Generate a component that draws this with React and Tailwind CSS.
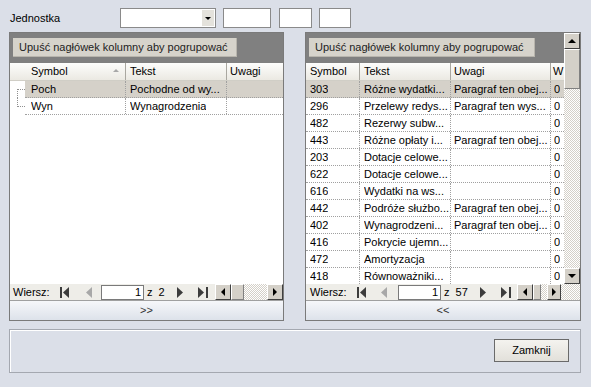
import React from "react";

const font = { fontFamily: '"Liberation Sans", Arial, sans-serif' };

const leftRows = [
  { symbol: "Poch", tekst: "Pochodne od wy...", uwagi: "" },
  { symbol: "Wyn", tekst: "Wynagrodzenia", uwagi: "" },
];

const rightRows = [
  ["303", "Różne wydatki...", "Paragraf ten obej..."],
  ["296", "Przelewy redys...", "Paragraf ten wys..."],
  ["482", "Rezerwy subw...", ""],
  ["443", "Różne opłaty i...", "Paragraf ten obej..."],
  ["203", "Dotacje celowe...", ""],
  ["622", "Dotacje celowe...", ""],
  ["616", "Wydatki na ws...", ""],
  ["442", "Podróże służbo...", "Paragraf ten obej..."],
  ["402", "Wynagrodzeni...", "Paragraf ten obej..."],
  ["416", "Pokrycie ujemn...", ""],
  ["472", "Amortyzacja", ""],
  ["418", "Równoważniki...", ""],
];

const dither =
  "bg-[repeating-conic-gradient(#d4d0c8_0%_25%,#ffffff_0%_50%)] bg-[length:2px_2px]";

const Tri = ({ dir = "left", color = "#000", size = 4 }) => {
  const s = size;
  const pts =
    dir === "left"
      ? `${s},0 ${s},${s * 2} 0,${s}`
      : dir === "right"
      ? `0,0 0,${s * 2} ${s},${s}`
      : dir === "up"
      ? `0,${s} ${s * 2},${s} ${s},0`
      : `0,0 ${s * 2},0 ${s},${s}`;
  const w = dir === "left" || dir === "right" ? s : s * 2;
  const h = dir === "left" || dir === "right" ? s * 2 : s;
  return (
    <svg width={w} height={h} viewBox={`0 0 ${w} ${h}`}>
      <polygon points={pts} fill={color} />
    </svg>
  );
};

const ScrollBtn = ({ dir, className = "" }) => (
  <div
    className={`flex items-center justify-center bg-[#d4d0c8] border border-t-white border-l-white border-b-[#404040] border-r-[#404040] ${className}`}
  >
    <Tri dir={dir} size={4} />
  </div>
);

const FirstIcon = () => (
  <svg width="10" height="11" viewBox="0 0 10 11">
    <rect x="0" y="0" width="2" height="11" fill="#3c3c3c" />
    <polygon points="9,0 9,11 3,5.5" fill="#3c3c3c" />
  </svg>
);

const LastIcon = () => (
  <svg width="10" height="11" viewBox="0 0 10 11">
    <polygon points="0,0 0,11 6,5.5" fill="#3c3c3c" />
    <rect x="8" y="0" width="2" height="11" fill="#3c3c3c" />
  </svg>
);

const PrevIcon = () => (
  <svg width="6" height="11" viewBox="0 0 6 11">
    <polygon points="6,0 6,11 0,5.5" fill="#a8a8a8" />
  </svg>
);

const NextIcon = () => (
  <svg width="6" height="11" viewBox="0 0 6 11">
    <polygon points="0,0 0,11 6,5.5" fill="#3c3c3c" />
  </svg>
);

const GroupBand = ({ width }) => (
  <div className="h-[30px] bg-[#808080] pl-[3px] pt-[5px] shrink-0">
    <div
      className={`h-[19px] ${width} bg-[#d6d3cb] border-b border-r border-[#b8b5ad] flex items-center pl-[6px] text-[11px] text-[#222] whitespace-nowrap overflow-hidden`}
    >
      Upuść nagłówek kolumny aby pogrupować
    </div>
  </div>
);

const Cell = ({ className = "", children }) => (
  <div className={`flex items-center overflow-hidden ${className}`}>
    <span className="truncate">{children}</span>
  </div>
);

const LeftPanel = () => (
  <div className="w-[275px] h-[289px] border border-[#7a7a7a] bg-white flex flex-col">
    <GroupBand width="w-[224px]" />
    <div className="h-[18px] flex bg-[linear-gradient(#fdfdfc,#ebe9e2)] border-b border-[#d0cec6] text-[11px] shrink-0">
      <div className="w-[15px]" />
      <div className="w-[101px] flex items-center pl-[6px] border-r border-[#a9a7a0] relative">
        Symbol
        <span className="absolute right-[6px] top-[6px]">
          <Tri dir="up" color="#a8a8a8" size={3} />
        </span>
      </div>
      <div className="w-[101px] flex items-center pl-[4px] border-r border-[#a9a7a0]">Tekst</div>
      <div className="flex-1 flex items-center pl-[3px]">Uwagi</div>
    </div>
    <div className="flex-1 text-[11px]">
      {leftRows.map((r, i) => (
        <div key={r.symbol} className="h-[17px] flex">
          <div className="w-[15px] relative">
            <div
              className={`absolute left-[7px] w-0 border-l border-dotted border-[#909090] ${
                i === 0 ? "top-[8px] h-[9px]" : "top-0 h-[9px]"
              }`}
            />
            <div className="absolute left-[7px] top-[8px] w-[8px] border-t border-dotted border-[#909090]" />
          </div>
          <div
            className={`flex-1 flex border-b border-dotted border-[#a0a0a0] ${
              i === 0 ? "bg-[#d5d1c9]" : "bg-white"
            }`}
          >
            <Cell className="w-[101px] pl-[6px] border-r border-dotted border-[#a0a0a0]">{r.symbol}</Cell>
            <Cell className="w-[101px] pl-[4px] border-r border-dotted border-[#a0a0a0]">{r.tekst}</Cell>
            <div className="flex-1" />
          </div>
        </div>
      ))}
    </div>
    <div className="h-[16px] bg-[#eeede8] flex items-center text-[11px] shrink-0">
      <span className="ml-[3px] w-[46px]">Wiersz:</span>
      <span className="ml-[1px] flex items-center"><FirstIcon /></span>
      <span className="ml-[16px] flex items-center"><PrevIcon /></span>
      <div className="ml-[9px] w-[43px] h-[15px] bg-white border border-[#7a7a7a] flex items-center justify-end pr-[2px] leading-none">1</div>
      <span className="ml-[3px]">z&nbsp; 2</span>
      <span className="ml-[12px] flex items-center"><NextIcon /></span>
      <span className="ml-[15px] flex items-center"><LastIcon /></span>
      <div className="ml-[7px] flex h-[16px] flex-1">
        <ScrollBtn dir="left" className="w-[16px] h-[16px]" />
        <div className="w-[13px] h-[16px] bg-[#d4d0c8] border border-t-white border-l-white border-b-[#808080] border-r-[#808080]" />
        <div className={`flex-1 ${dither}`} />
        <ScrollBtn dir="right" className="w-[16px] h-[16px]" />
      </div>
    </div>
    <div className="h-[20px] border-t border-[#a0a0a0] bg-[linear-gradient(#f6f7fa,#dde2ea)] flex items-center justify-center text-[11px] text-[#333] shrink-0">
      &gt;&gt;
    </div>
  </div>
);

const RightPanel = () => (
  <div className="w-[276px] h-[289px] border border-[#7a7a7a] bg-white flex flex-col">
    <div className="flex flex-1 min-h-0">
      <div className="flex-1 flex flex-col overflow-hidden">
        <GroupBand width="w-[226px]" />
        <div className="h-[18px] flex bg-[linear-gradient(#fdfdfc,#ebe9e2)] border-b border-[#d0cec6] text-[11px] shrink-0 whitespace-nowrap">
          <div className="w-[54px] flex items-center pl-[4px] border-r border-[#a9a7a0]">Symbol</div>
          <div className="w-[91px] flex items-center pl-[4px] border-r border-[#a9a7a0]">Tekst</div>
          <div className="w-[100px] flex items-center pl-[3px] border-r border-[#a9a7a0]">Uwagi</div>
          <div className="flex-1 flex items-center pl-[2px] overflow-hidden">W</div>
        </div>
        <div className="flex-1 text-[11px] overflow-hidden">
          {rightRows.map((r, i) => (
            <div
              key={r[0]}
              className={`h-[17px] flex whitespace-nowrap border-b border-dotted border-[#a0a0a0] ${
                i === 0 ? "bg-[#d5d1c9]" : "bg-white"
              }`}
            >
              <Cell className="w-[54px] pl-[4px] border-r border-dotted border-[#a0a0a0]">{r[0]}</Cell>
              <Cell className="w-[91px] pl-[4px] border-r border-dotted border-[#a0a0a0]">{r[1]}</Cell>
              <Cell className="w-[100px] pl-[3px] border-r border-dotted border-[#a0a0a0]">{r[2]}</Cell>
              <Cell className="flex-1 pl-[3px]">0</Cell>
            </div>
          ))}
        </div>
      </div>
      <div className="w-[16px] flex flex-col">
        <ScrollBtn dir="up" className="w-[16px] h-[16px]" />
        <div className="w-[16px] h-[40px] bg-[#d4d0c8] border border-t-white border-l-white border-b-[#808080] border-r-[#808080]" />
        <div className={`flex-1 ${dither}`} />
        <ScrollBtn dir="down" className="w-[16px] h-[16px]" />
      </div>
    </div>
    <div className="h-[16px] bg-[#eeede8] flex items-center text-[11px] shrink-0">
      <span className="ml-[4px] w-[47px]">Wiersz:</span>
      <span className="flex items-center"><FirstIcon /></span>
      <span className="ml-[14px] flex items-center"><PrevIcon /></span>
      <div className="ml-[11px] w-[43px] h-[15px] bg-white border border-[#7a7a7a] flex items-center justify-end pr-[2px] leading-none">1</div>
      <span className="ml-[3px]">z&nbsp; 57</span>
      <span className="ml-[12px] flex items-center"><NextIcon /></span>
      <span className="ml-[15px] flex items-center"><LastIcon /></span>
      <div className="ml-[6px] flex h-[16px] flex-1">
        <ScrollBtn dir="left" className="w-[16px] h-[16px]" />
        <div className="w-[8px] h-[16px] bg-[#d4d0c8] border border-t-white border-l-white border-b-[#808080] border-r-[#808080]" />
        <div className={`w-[6px] ${dither}`} />
        <ScrollBtn dir="right" className="w-[14px] h-[16px]" />
        <div className={`flex-1 ${dither}`} />
      </div>
    </div>
    <div className="h-[20px] border-t border-[#a0a0a0] bg-[linear-gradient(#f6f7fa,#dde2ea)] flex items-center justify-center text-[11px] text-[#333] shrink-0">
      &lt;&lt;
    </div>
  </div>
);

const TextBox = ({ w }) => (
  <div className={`${w} h-[20px] bg-white border border-[#8a8a8a]`} />
);

export default function App() {
  return (
    <div
      className="w-[591px] h-[387px] bg-[#dbdfe8] overflow-hidden text-black flex flex-col"
      style={font}
    >
      <div className="flex items-center h-[20px] mt-[8px] shrink-0">
        <span className="ml-[10px] w-[110px] text-[11px]">Jednostka</span>
        <div className="w-[96px] h-[20px] bg-white border border-[#8a8a8a] flex justify-end p-[1px]">
          <div className="w-[12px] h-full bg-[#e4e2dc] flex items-center justify-center">
            <Tri dir="down" size={3} />
          </div>
        </div>
        <div className="ml-[7px]"><TextBox w="w-[48px]" /></div>
        <div className="ml-[8px]"><TextBox w="w-[33px]" /></div>
        <div className="ml-[7px]"><TextBox w="w-[32px]" /></div>
      </div>
      <div className="flex mt-[4px] ml-[9px] shrink-0">
        <LeftPanel />
        <div className="ml-[21px]">
          <RightPanel />
        </div>
      </div>
      <div className="mt-[8px] ml-[9px] w-[572px] h-[44px] border border-[#a4a8b0] shadow-[inset_1px_1px_0_#ffffff] flex items-start justify-end pt-[9px] pr-[11px] shrink-0">
        <button
          type="button"
          className="w-[75px] h-[23px] bg-[linear-gradient(#f4f3ef,#e2e0da)] border border-[#6a6a6a] text-[11px] text-black"
        >
          Zamknij
        </button>
      </div>
    </div>
  );
}
